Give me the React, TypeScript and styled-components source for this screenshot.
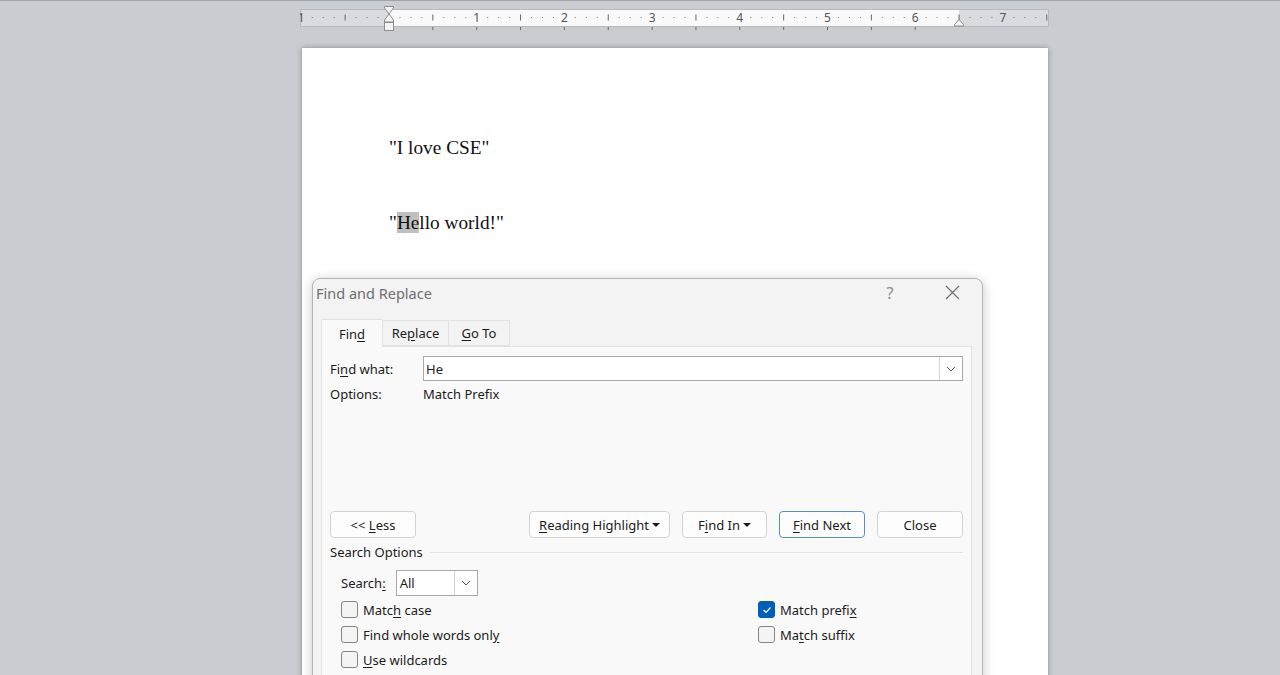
import React from 'react';
import styled, { createGlobalStyle } from 'styled-components';

const GlobalStyle = createGlobalStyle`
  html, body {
    margin: 0;
    padding: 0;
    background: #c9ccd1;
  }
  * {
    box-sizing: border-box;
  }
`;

const Workspace = styled.div`
  position: relative;
  width: 1280px;
  height: 675px;
  overflow: hidden;
  padding-left: 296px;
  background: #c9ccd1;
  border-top: 1px solid #a3a6ab;
  font-family: 'Noto Sans', 'Liberation Sans', sans-serif;
`;

const RulerSvg = styled.svg`
  display: block;
  margin-top: 3px;
`;

const Page = styled.div`
  width: 746px;
  min-height: 700px;
  margin: 14px 0 0 6px;
  padding: 88px 0 0 87px;
  background: #fff;
  box-shadow: 0 0 6px rgba(0, 0, 0, 0.28), 0 0 1px rgba(0, 0, 0, 0.2);
  font-family: 'Liberation Serif', 'Times New Roman', serif;
  font-size: 19.3px;
  color: #111;
`;

const Para = styled.p<{ $gap?: number }>`
  margin: ${(p) => p.$gap ?? 0}px 0 0;
  line-height: 24px;
`;

const Hit = styled.span`
  background: #c0c0c0;
`;

/* dialog floats over the document page */
const Dialog = styled.div`
  position: absolute;
  left: 312px;
  top: 277px;
  width: 671px;
  height: 430px;
  display: flex;
  flex-direction: column;
  background: #f3f3f3;
  border: 1px solid #b5b5b5;
  border-radius: 8px;
  box-shadow: 0 2px 12px rgba(0, 0, 0, 0.22);
  color: #1b1b1b;
  font-size: 13px;
`;

const TitleBar = styled.div`
  height: 27px;
  display: flex;
  align-items: center;
  padding-left: 3px;
`;

const Title = styled.div`
  flex: 1;
  font-size: 14.5px;
  color: #6f6f6f;
`;

const Help = styled.div`
  width: 22px;
  text-align: center;
  font-size: 16px;
  color: #8a8a8a;
  margin-right: 39px;
`;

const CloseX = styled.div`
  width: 24px;
  height: 24px;
  display: flex;
  align-items: center;
  justify-content: center;
  margin-right: 18px;
`;

const Tabs = styled.div`
  display: flex;
  align-items: flex-end;
  margin: 13px 0 0 8px;
  height: 27px;
`;

const Tab = styled.div<{ $active?: boolean; $w: number }>`
  width: ${(p) => p.$w}px;
  height: ${(p) => (p.$active ? 28 : 26)}px;
  display: flex;
  align-items: center;
  justify-content: center;
  border: 1px solid #e2e2e2;
  border-bottom: ${(p) => (p.$active ? 'none' : '1px solid #e2e2e2')};
  border-left: ${(p) => (p.$active ? '1px solid #e2e2e2' : 'none')};
  background: ${(p) => (p.$active ? '#f9f9f9' : '#f3f3f3')};
  margin-bottom: ${(p) => (p.$active ? -1 : 0)}px;
  position: relative;
  z-index: ${(p) => (p.$active ? 1 : 0)};
`;

const Panel = styled.div`
  flex: 1;
  margin: 0 10px 0 8px;
  padding: 9px 8px 0 8px;
  background: #f9f9f9;
  border: 1px solid #e2e2e2;
  display: flex;
  flex-direction: column;
`;

const FieldRow = styled.div`
  display: flex;
  align-items: center;
  height: 25px;
`;

const FieldLabel = styled.div`
  width: 93px;
`;

const TextBox = styled.div`
  flex: 1;
  height: 25px;
  display: flex;
  align-items: center;
  background: #fff;
  border: 1px solid #a8a8a8;
`;

const TextValue = styled.div<{ $pad?: number }>`
  flex: 1;
  padding-left: ${(p) => p.$pad ?? 2}px;
`;

const DropBtn = styled.div<{ $w: number }>`
  width: ${(p) => p.$w}px;
  height: 100%;
  display: flex;
  align-items: center;
  justify-content: center;
  border-left: 1px solid #d4d4d4;
`;

const OptionsRow = styled.div`
  display: flex;
  margin-top: 4px;
  height: 18px;
  align-items: center;
`;

const ButtonRow = styled.div`
  display: flex;
  justify-content: space-between;
  margin-top: 108px;
`;

const ButtonGroup = styled.div`
  display: flex;
  gap: 12px;
`;

const Button = styled.div<{ $w: number; $primary?: boolean }>`
  width: ${(p) => p.$w}px;
  height: 27px;
  display: flex;
  align-items: center;
  justify-content: center;
  gap: 3px;
  background: #fdfdfd;
  border: 1px solid ${(p) => (p.$primary ? '#4f8fd6' : '#d3d3d3')};
  border-radius: 4px;
`;

const Caret = styled.span`
  width: 0;
  height: 0;
  border-left: 4px solid transparent;
  border-right: 4px solid transparent;
  border-top: 4px solid #1b1b1b;
`;

const Section = styled.div`
  display: flex;
  align-items: center;
  margin-top: 4px;
  height: 20px;

  &::after {
    content: '';
    flex: 1;
    height: 1px;
    margin-left: 7px;
    background: #e3e3e3;
  }
`;

const SearchRow = styled.div`
  display: flex;
  align-items: center;
  gap: 10px;
  margin: 8px 0 0 11px;
`;

const SelectBox = styled.div`
  width: 82px;
  height: 26px;
  display: flex;
  align-items: center;
  background: #fff;
  border: 1px solid #a8a8a8;
`;

const CheckGrid = styled.div`
  display: grid;
  grid-template-columns: 417px auto;
  grid-auto-rows: 25px;
  margin: 1px 0 0 11px;
`;

const CheckItem = styled.label`
  display: flex;
  align-items: center;
  gap: 5px;
`;

const Box = styled.span<{ $on?: boolean }>`
  width: 17px;
  height: 17px;
  display: flex;
  align-items: center;
  justify-content: center;
  border-radius: 3px;
  border: 1px solid ${(p) => (p.$on ? '#005fb8' : '#858585')};
  background: ${(p) => (p.$on ? '#005fb8' : '#f4f4f4')};
`;

const Key = styled.u`
  text-underline-offset: 2px;
`;

const Chevron = () => (
  <svg width="10" height="6" viewBox="0 0 10 6">
    <polyline points="1,1 5,5 9,1" fill="none" stroke="#555" strokeWidth="1" />
  </svg>
);

const INCH = 87.7;
const ZERO = 93;

const Ruler = () => {
  const marks: React.ReactNode[] = [];
  const below: React.ReactNode[] = [];
  for (let i = -8; i <= 61; i++) {
    const x = ZERO + (i * INCH) / 8;
    if (x < 4 || x > 751) continue;
    if (i % 8 === 0) {
      if (i !== 0)
        marks.push(
          <text key={'n' + i} x={x} y={18} textAnchor="middle" fontSize="12" fill="#555" fontFamily="Noto Sans, sans-serif">
            {Math.abs(i / 8)}
          </text>
        );
    } else if (Math.abs(i % 8) === 4) {
      marks.push(<line key={'h' + i} x1={x} x2={x} y1={10.5} y2={16.5} stroke="#666" strokeWidth="1" />);
    } else {
      marks.push(<rect key={'d' + i} x={x - 0.5} y={13} width={1} height={1} fill="#777" />);
    }
    if (i > 0 && i <= 48 && i % 4 === 0) {
      below.push(<line key={'b' + i} x1={x} x2={x} y1={23} y2={26} stroke="#666" strokeWidth="1" />);
    }
  }
  return (
    <RulerSvg width="760" height="30" viewBox="0 0 760 30">
      <defs>
        <clipPath id="rulerClip">
          <rect x="4" y="5" width="749" height="18" />
        </clipPath>
      </defs>
      <rect x="4.5" y="5.5" width="748" height="17" fill="#f9f9f9" stroke="#b7b9bd" />
      <rect x="5" y="6" width={ZERO - 5} height="16" fill="#d9dbde" />
      <rect x="663" y="6" width="89" height="16" fill="#d9dbde" />
      <g clipPath="url(#rulerClip)">{marks}</g>
      {below}
      <path d="M88.5 2.5 H97.5 V4 L93 10 L88.5 4 Z" fill="#f4f4f4" stroke="#8d8d8d" />
      <path d="M93 10 L97.5 16 V18 H88.5 V16 Z" fill="#f4f4f4" stroke="#8d8d8d" />
      <rect x="88.5" y="18.5" width="9" height="8" fill="#f4f4f4" stroke="#8d8d8d" />
      <path d="M663 15.5 L667.5 20.5 V22 H658.5 V20.5 Z" fill="#f4f4f4" stroke="#8d8d8d" />
    </RulerSvg>
  );
};

export default function App() {
  return (
    <>
      <GlobalStyle />
      <Workspace>
        <Ruler />
        <Page>
          <Para>"I love CSE"</Para>
          <Para $gap={51}>
            "<Hit>He</Hit>llo world!"
          </Para>
        </Page>

        <Dialog>
          <TitleBar>
            <Title>Find and Replace</Title>
            <Help>?</Help>
            <CloseX>
              <svg width="15" height="15" viewBox="0 0 15 15">
                <path d="M1 1 L14 14 M14 1 L1 14" stroke="#707070" strokeWidth="1.2" />
              </svg>
            </CloseX>
          </TitleBar>
          <Tabs>
            <Tab $active $w={62}>
              <span>
                Fin<Key>d</Key>
              </span>
            </Tab>
            <Tab $w={66}>
              <span>
                Re<Key>p</Key>lace
              </span>
            </Tab>
            <Tab $w={61}>
              <span>
                <Key>G</Key>o To
              </span>
            </Tab>
          </Tabs>
          <Panel>
            <FieldRow>
              <FieldLabel>
                Fi<Key>n</Key>d what:
              </FieldLabel>
              <TextBox>
                <TextValue>He</TextValue>
                <DropBtn $w={23}>
                  <Chevron />
                </DropBtn>
              </TextBox>
            </FieldRow>
            <OptionsRow>
              <FieldLabel>Options:</FieldLabel>
              <div>Match Prefix</div>
            </OptionsRow>

            <ButtonRow>
              <Button $w={86}>
                <span>
                  &lt;&lt; <Key>L</Key>ess
                </span>
              </Button>
              <ButtonGroup>
                <Button $w={141}>
                  <span>
                    <Key>R</Key>eading Highlight
                  </span>
                  <Caret />
                </Button>
                <Button $w={85}>
                  <span>
                    F<Key>i</Key>nd In
                  </span>
                  <Caret />
                </Button>
                <Button $w={86} $primary>
                  <span>
                    <Key>F</Key>ind Next
                  </span>
                </Button>
                <Button $w={86}>Close</Button>
              </ButtonGroup>
            </ButtonRow>

            <Section>Search Options</Section>
            <SearchRow>
              <span>
                Search<Key>:</Key>
              </span>
              <SelectBox>
                <TextValue $pad={3}>All</TextValue>
                <DropBtn $w={23}>
                  <Chevron />
                </DropBtn>
              </SelectBox>
            </SearchRow>

            <CheckGrid>
              <CheckItem>
                <Box />
                <span>
                  Matc<Key>h</Key> case
                </span>
              </CheckItem>
              <CheckItem>
                <Box $on>
                  <svg width="10" height="8" viewBox="0 0 10 8">
                    <polyline points="1.5,4 4,6.5 8.5,1.5" fill="none" stroke="#fff" strokeWidth="1.2" />
                  </svg>
                </Box>
                <span>
                  Match prefi<Key>x</Key>
                </span>
              </CheckItem>
              <CheckItem>
                <Box />
                <span>
                  Find whole words onl<Key>y</Key>
                </span>
              </CheckItem>
              <CheckItem>
                <Box />
                <span>
                  Ma<Key>t</Key>ch suffix
                </span>
              </CheckItem>
              <CheckItem>
                <Box />
                <span>
                  <Key>U</Key>se wildcards
                </span>
              </CheckItem>
            </CheckGrid>
          </Panel>
        </Dialog>
      </Workspace>
    </>
  );
}
